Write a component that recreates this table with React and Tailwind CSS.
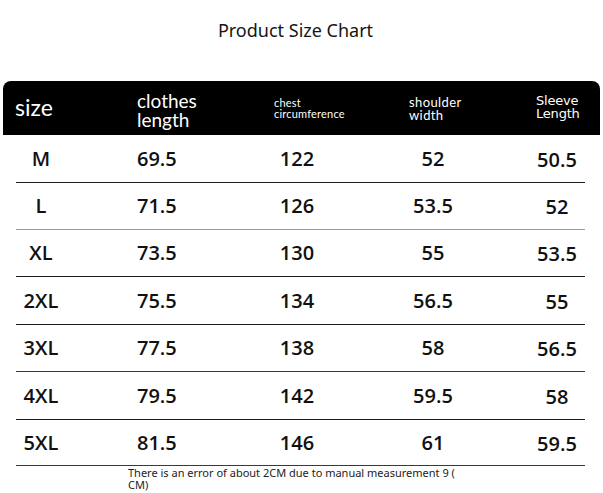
const rows = [
  { size: 'M', length: '69.5', chest: '122', shoulder: '52', sleeve: '50.5', line: 'border-[#1c1c1c]', h: 'h-[48px]' },
  { size: 'L', length: '71.5', chest: '126', shoulder: '53.5', sleeve: '52', line: 'border-[#9a9a9a]', h: 'h-[47px]' },
  { size: 'XL', length: '73.5', chest: '130', shoulder: '55', sleeve: '53.5', line: 'border-[#1c1c1c]', h: 'h-[47px]' },
  { size: '2XL', length: '75.5', chest: '134', shoulder: '56.5', sleeve: '55', line: 'border-[#1c1c1c]', h: 'h-[48px]' },
  { size: '3XL', length: '77.5', chest: '138', shoulder: '58', sleeve: '56.5', line: 'border-[#3a3a3a]', h: 'h-[47px]' },
  { size: '4XL', length: '79.5', chest: '142', shoulder: '59.5', sleeve: '58', line: 'border-[#1c1c1c]', h: 'h-[48px]' },
  { size: '5XL', length: '81.5', chest: '146', shoulder: '61', sleeve: '59.5', line: 'border-[#3a3a3a]', h: 'h-[46px]' },
]

export default function App() {
  return (
    <div className="w-[603px] h-[493px] bg-white overflow-hidden font-['Open_Sans',sans-serif] text-[#111]">
      <h1 className="pt-[18px] text-center text-[18px] leading-[24px] font-['Noto_Sans',sans-serif] font-normal text-[#151515] pr-[12px]">
        Product Size Chart
      </h1>

      <div className="mt-[39px] mx-[3px] h-[54px] bg-black rounded-t-[8px] flex items-center pl-[12px] text-white font-['Lato',sans-serif]">
        <div className="w-[122px] text-[23px] leading-[24px] pb-[2px]">size</div>
        <div className="w-[137px] text-[19px] leading-[19px] pt-[3px]">
          clothes
          <br />
          length
        </div>
        <div className="w-[135px] text-[11px] leading-[11px] tracking-[0.2px]">
          chest
          <br />
          circumference
        </div>
        <div className="w-[127px] text-[13px] leading-[13px] pt-[2px] tracking-[0.4px]">
          shoulder
          <br />
          width
        </div>
        <div className="text-[13px] leading-[13px] font-['DejaVu_Sans',sans-serif] tracking-[-0.2px] pb-[2px]">
          Sleeve
          <br />
          Length
        </div>
      </div>

      <div className="mx-[16px] w-[569px]">
        {rows.map((r) => (
          <div
            key={r.size}
            className={`flex items-center border-b-[1.5px] ${r.line} ${r.h} text-[20px] font-semibold`}
          >
            <div className="w-[50px] text-center">{r.size}</div>
            <div className="w-[171px] pl-[71px]">{r.length}</div>
            <div className="w-[120px] text-center">{r.chest}</div>
            <div className="w-[152px] text-center">{r.shoulder}</div>
            <div className="ml-[20px] w-[56px] text-center pt-[2px]">{r.sleeve}</div>
          </div>
        ))}
      </div>

      <p className="ml-[128px] w-[345px] text-[11px] leading-[12px] font-['Noto_Sans',sans-serif] text-[#222] pt-[1px]">
        There is an error of about 2CM due to manual measurement 9 ( CM)
      </p>
    </div>
  )
}
